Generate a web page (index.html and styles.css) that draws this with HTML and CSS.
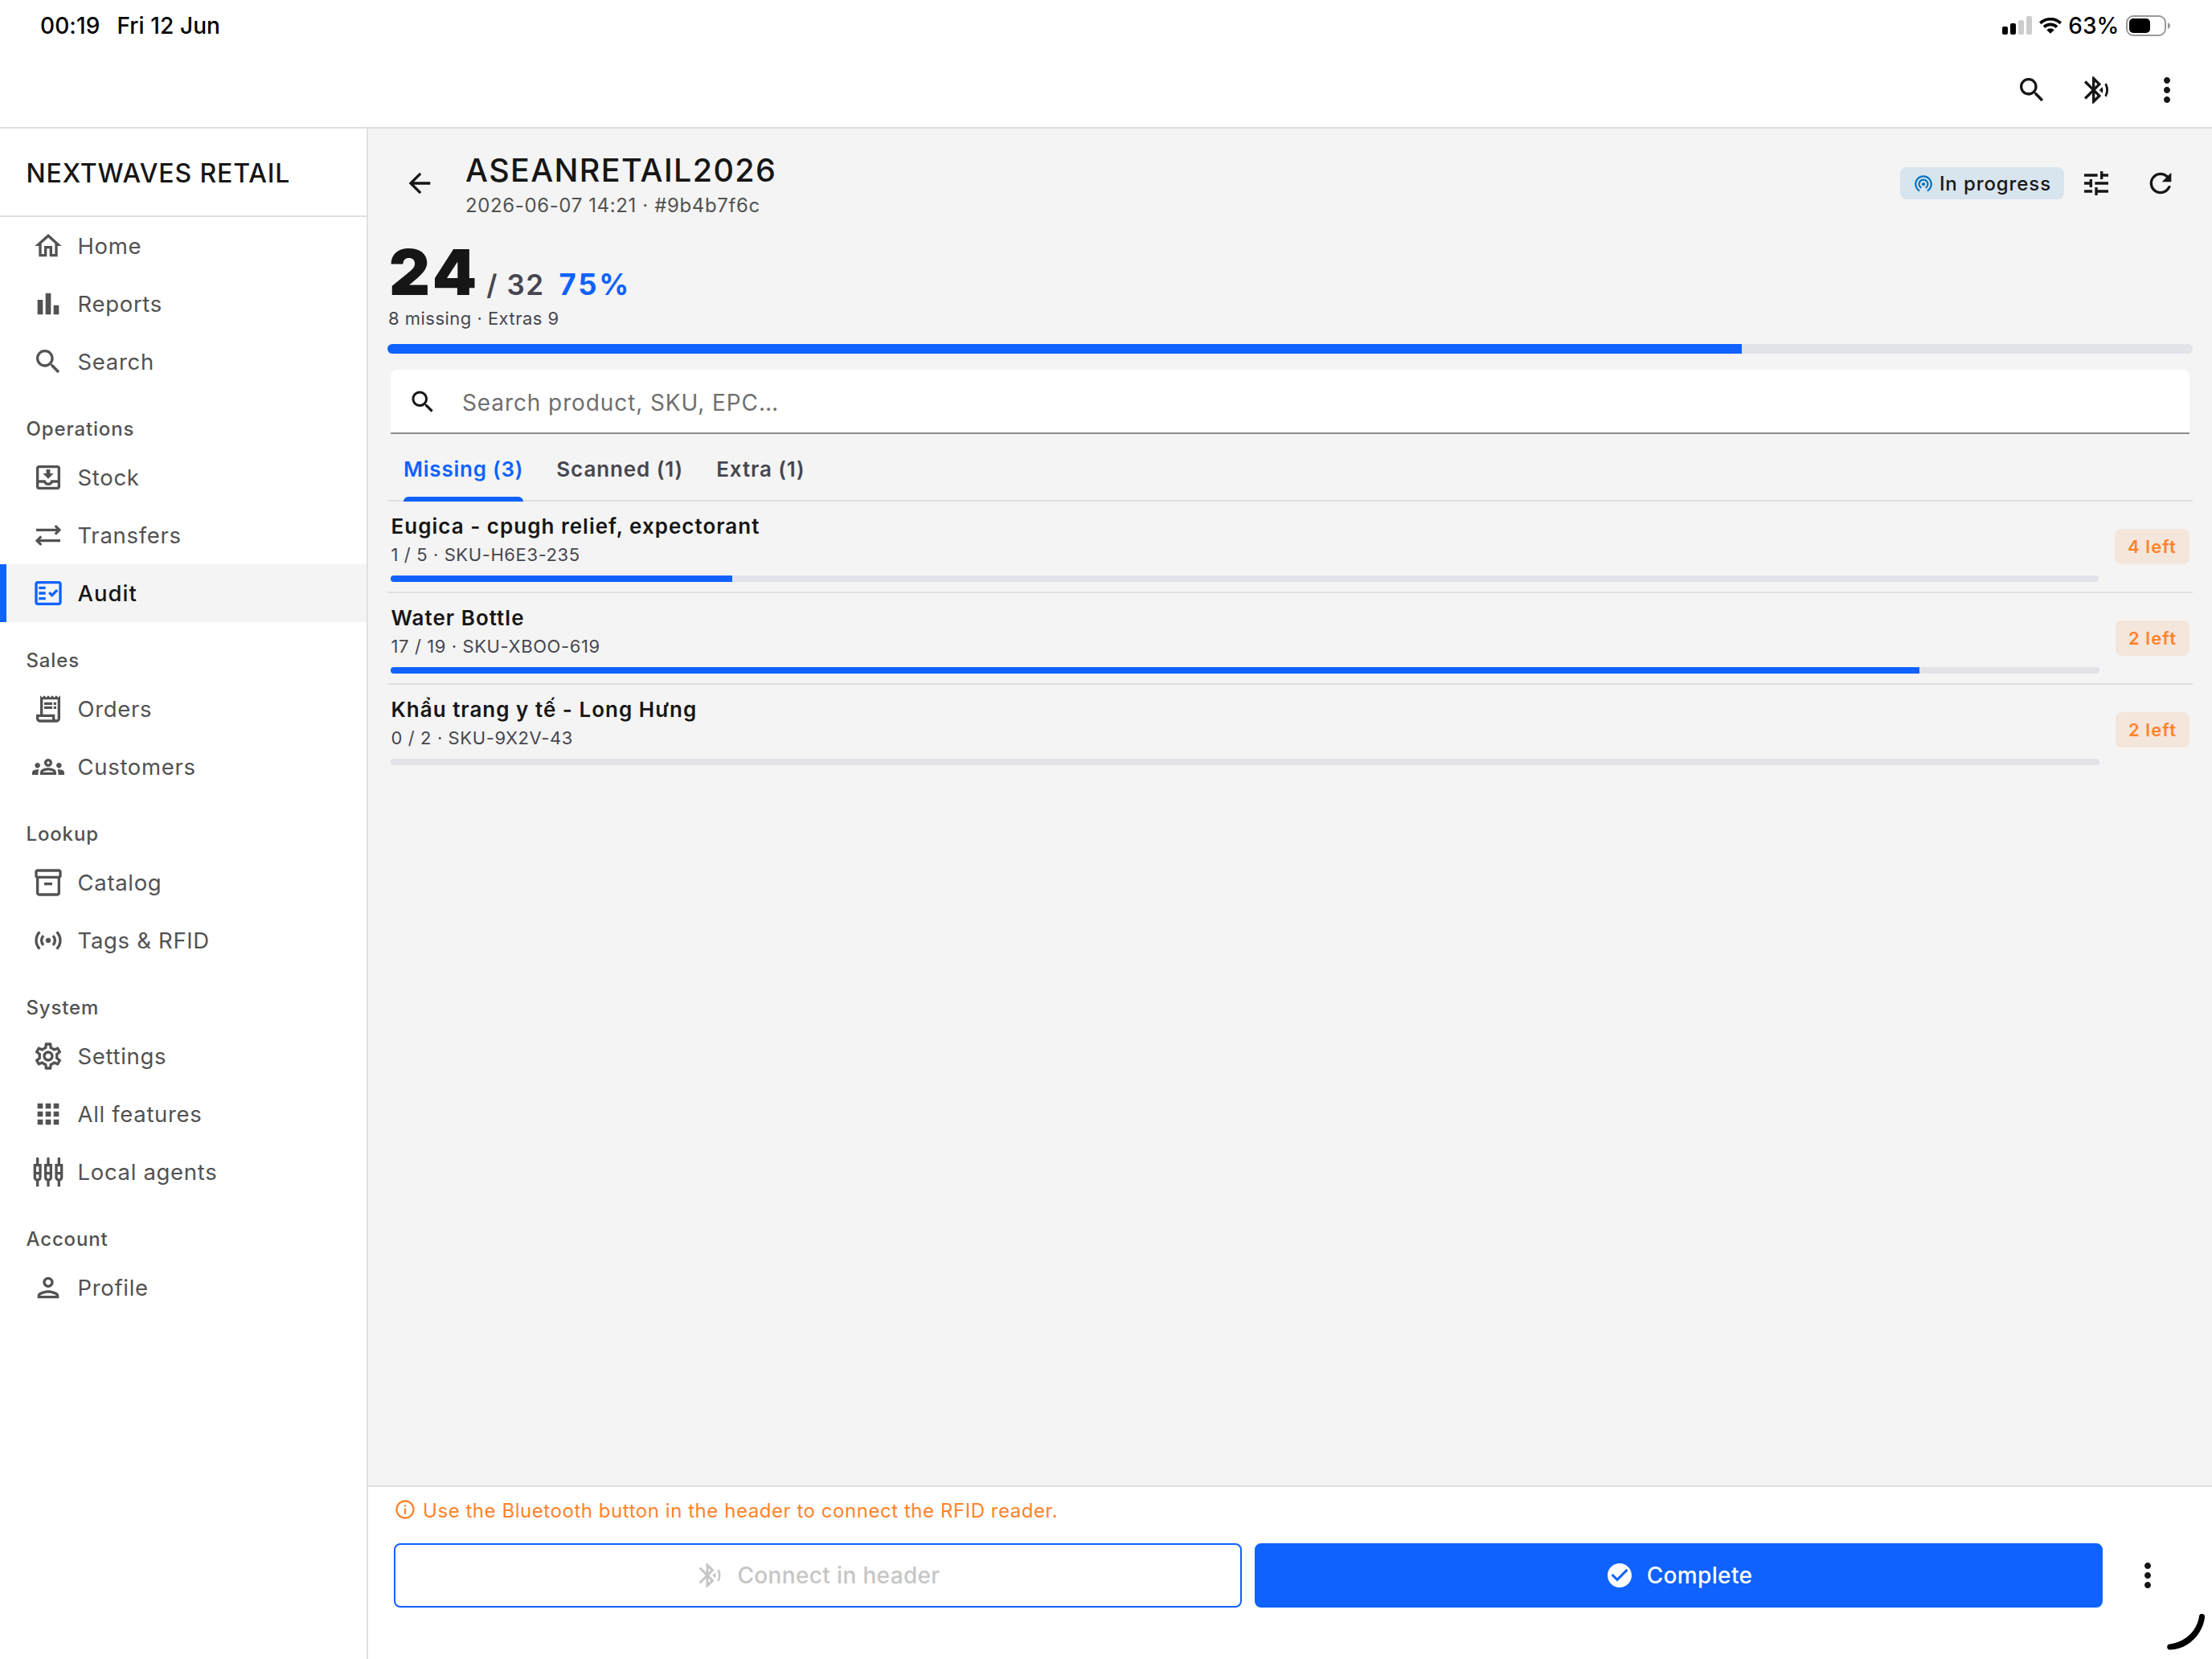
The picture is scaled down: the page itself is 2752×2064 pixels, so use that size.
FILE: index.html
```
<!DOCTYPE html>
<html lang="en">
<head>
    <meta charset="utf-8">
    <title>Nextwaves Retail - Audit</title>
    <link rel="stylesheet" href="styles.css">
</head>
<body>
    <svg class="sprite">
        <symbol id="i-search" viewBox="0 0 24 24"><path d="M15.5 14h-.79l-.28-.27C15.41 12.59 16 11.11 16 9.5 16 5.91 13.09 3 9.5 3S3 5.91 3 9.5 5.91 16 9.5 16c1.61 0 3.09-.59 4.23-1.57l.27.28v.79l5 4.99L20.49 19zm-6 0C7.01 14 5 11.99 5 9.5S7.01 5 9.5 5 14 7.01 14 9.5 11.99 14 9.5 14"/></symbol>
        <symbol id="i-bluetooth" viewBox="0 0 24 24"><path d="M14.24 12.01l2.32 2.32c.28-.72.44-1.51.44-2.33 0-.82-.16-1.59-.43-2.31l-2.33 2.32zm5.29-5.3l-1.26 1.26c.63 1.21.98 2.57.98 4.02s-.36 2.82-.98 4.02l1.2 1.2c.97-1.54 1.54-3.36 1.54-5.31-.01-1.89-.55-3.67-1.48-5.19zm-3.82 1L10 2H9v7.59L4.41 5 3 6.41 8.59 12 3 17.59 4.41 19 9 14.41V22h1l5.71-5.71-4.3-4.29 4.3-4.29zM11 5.83l1.88 1.88L11 9.59V5.83zm1.88 10.46L11 18.17v-3.76l1.88 1.88z"/></symbol>
        <symbol id="i-more" viewBox="0 0 24 24"><path d="M12 8c1.1 0 2-.9 2-2s-.9-2-2-2-2 .9-2 2 .9 2 2 2m0 2c-1.1 0-2 .9-2 2s.9 2 2 2 2-.9 2-2-.9-2-2-2m0 6c-1.1 0-2 .9-2 2s.9 2 2 2 2-.9 2-2-.9-2-2-2"/></symbol>
    </svg>

    <header class="topbar">
        <div class="status">
            <span>00:19</span>
            <span class="status-date">Fri 12 Jun</span>
            <div class="status-right">
                <svg width="37" height="24" viewBox="0 0 37 24">
                    <rect x="0" y="13" width="7" height="10" rx="2"/>
                    <rect x="10" y="9" width="7" height="14" rx="2"/>
                    <rect x="20" y="5" width="7" height="18" rx="2" fill="#ccc"/>
                    <rect x="30" y="0" width="7" height="23" rx="2" fill="#ccc"/>
                </svg>
                <svg width="28" height="20" viewBox="0 0 28 20">
                    <g fill="none" stroke="#000" stroke-width="3.7">
                        <path d="M1.3 6.9a18.2 18.2 0 0 1 25.4 0"/>
                        <path d="M6 11.7a11.5 11.5 0 0 1 16 0"/>
                    </g>
                    <path d="M9.3 15.2a6.8 6.8 0 0 1 9.4 0L14 19.8z"/>
                </svg>
                <span>63%</span>
                <svg width="56" height="26" viewBox="0 0 56 26">
                    <rect x="1" y="1" width="48" height="24" rx="8" fill="none" stroke="#999" stroke-width="2"/>
                    <rect x="4" y="4" width="26" height="18" rx="5"/>
                    <path d="M52 9c1.9.8 3 2.3 3 4s-1.1 3.2-3 4z" fill="#999"/>
                </svg>
            </div>
        </div>
        <div class="toolbar">
            <button class="icon-btn"><svg class="ic40"><use href="#i-search"/></svg></button>
            <button class="icon-btn"><svg class="ic40"><use href="#i-bluetooth"/></svg></button>
            <button class="icon-btn more"><svg class="ic48"><use href="#i-more"/></svg></button>
        </div>
    </header>

    <div class="layout">
        <nav class="sidebar">
            <div class="brand">NEXTWAVES RETAIL</div>
            <a class="item"><svg class="ic40" viewBox="0 0 24 24"><path d="M12 5.69l5 4.5V18h-2v-6H9v6H7v-7.81zM12 3L2 12h3v8h6v-6h2v6h6v-8h3z"/></svg>Home</a>
            <a class="item"><svg class="ic40" viewBox="0 0 24 24"><path d="M4 9h4v11H4zm12 4h4v7h-4zm-6-9h4v16h-4z"/></svg>Reports</a>
            <a class="item"><svg class="ic40"><use href="#i-search"/></svg>Search</a>

            <div class="section">Operations</div>
            <a class="item"><svg class="ic40" viewBox="0 0 24 24"><path d="M19 3H5c-1.1 0-2 .9-2 2v14c0 1.1.9 2 2 2h14c1.1 0 2-.9 2-2V5c0-1.1-.9-2-2-2zm0 16H5v-3h3.56c.69 1.19 1.97 2 3.45 2s2.75-.81 3.45-2H19v3zm0-5h-4.99c0 1.1-.9 2-2 2s-2-.9-2-2H5V5h14v9zM16 9h-2.55V6h-2.9v3H8l4 4z"/></svg>Stock</a>
            <a class="item"><svg class="ic40 line" viewBox="0 0 24 24"><path d="M3 8h17.3M17.2 4.8L20.4 8l-3.2 3.2M21 16H3.7M6.8 12.8L3.6 16l3.2 3.2"/></svg>Transfers</a>
            <a class="item active"><svg class="ic40" viewBox="0 0 24 24"><path d="M20 3H4c-1.1 0-2 .9-2 2v14c0 1.1.9 2 2 2h16c1.1 0 2-.9 2-2V5c0-1.1-.9-2-2-2m0 16H4V5h16z"/><path d="M19.41 10.42L17.99 9l-3.17 3.17-1.41-1.42L12 12.16 14.82 15zM5 7h5v2H5zm0 4h5v2H5zm0 4h5v2H5z"/></svg>Audit</a>

            <div class="section">Sales</div>
            <a class="item"><svg class="ic40" viewBox="0 0 24 24"><path d="M19.5 3.5L18 2l-1.5 1.5L15 2l-1.5 1.5L12 2l-1.5 1.5L9 2 7.5 3.5 6 2v14H3v3c0 1.66 1.34 3 3 3h12c1.66 0 3-1.34 3-3V2zM15 20H6c-.55 0-1-.45-1-1v-1h10zm4-1c0 .55-.45 1-1 1s-1-.45-1-1v-3H8V5h11z"/><path d="M9 7h6v2H9zm7 0h2v2h-2zm-7 3h6v2H9zm7 0h2v2h-2z"/></svg>Orders</a>
            <a class="item"><svg class="ic40 wide" viewBox="0 0 24 24"><path d="M4 13c1.1 0 2-.9 2-2s-.9-2-2-2-2 .9-2 2 .9 2 2 2m1.13 1.1C4.76 14.04 4.39 14 4 14c-.99 0-1.93.21-2.78.58C.48 14.9 0 15.62 0 16.43V18h4.5v-1.61c0-.83.23-1.61.63-2.29M20 13c1.1 0 2-.9 2-2s-.9-2-2-2-2 .9-2 2 .9 2 2 2m4 3.43c0-.81-.48-1.53-1.22-1.85-.85-.37-1.79-.58-2.78-.58-.39 0-.76.04-1.13.1.4.68.63 1.46.63 2.29V18H24zm-7.76-2.78c-1.17-.52-2.61-.9-4.24-.9s-3.07.39-4.24.9C6.68 14.13 6 15.21 6 16.39V18h12v-1.61c0-1.18-.68-2.26-1.76-2.74M8.07 16c.09-.23.13-.39.91-.69.97-.38 1.99-.56 3.02-.56s2.05.18 3.02.56c.77.3.81.46.91.69zM12 8c.55 0 1 .45 1 1s-.45 1-1 1-1-.45-1-1 .45-1 1-1m0-2c-1.66 0-3 1.34-3 3s1.34 3 3 3 3-1.34 3-3-1.34-3-3-3"/></svg>Customers</a>

            <div class="section">Lookup</div>
            <a class="item"><svg class="ic40" viewBox="0 0 24 24"><path d="M20 2H4c-1 0-2 .9-2 2v3.01c0 .72.43 1.34 1 1.69V20c0 1.1 1.1 2 2 2h14c.9 0 2-.9 2-2V8.7c.57-.35 1-.97 1-1.69V4c0-1.1-1-2-2-2m-1 18H5V9h14zm1-13H4V4h16z"/><path d="M9 12h6v2H9z"/></svg>Catalog</a>
            <a class="item"><svg class="ic40" viewBox="0 0 24 24"><path d="M7.76 16.24C6.67 15.16 6 13.66 6 12s.67-3.16 1.76-4.24l1.42 1.42C8.45 9.9 8 10.9 8 12s.45 2.1 1.17 2.83zm8.48 0C17.33 15.16 18 13.66 18 12s-.67-3.16-1.76-4.24l-1.42 1.42C15.55 9.9 16 10.9 16 12s-.45 2.1-1.17 2.83zM12 10c-1.1 0-2 .9-2 2s.9 2 2 2 2-.9 2-2-.9-2-2-2m8 2c0 2.21-.9 4.21-2.35 5.65l1.42 1.42C20.88 17.26 22 14.76 22 12s-1.12-5.26-2.93-7.07l-1.42 1.42C19.1 7.79 20 9.79 20 12M6.35 6.35L4.93 4.93C3.12 6.74 2 9.24 2 12s1.12 5.26 2.93 7.07l1.42-1.42C4.9 16.21 4 14.21 4 12s.9-4.21 2.35-5.65"/></svg>Tags &amp; RFID</a>

            <div class="section">System</div>
            <a class="item"><svg class="ic40" viewBox="0 0 24 24"><path d="M19.43 12.98c.04-.32.07-.64.07-.98s-.03-.66-.07-.98l2.11-1.65c.19-.15.24-.42.12-.64l-2-3.46c-.09-.16-.26-.25-.44-.25-.06 0-.12.01-.17.03l-2.49 1c-.52-.4-1.08-.73-1.69-.98l-.38-2.65C14.46 2.18 14.25 2 14 2h-4c-.25 0-.46.18-.49.42l-.38 2.65c-.61.25-1.17.59-1.69.98l-2.49-1c-.06-.02-.12-.03-.18-.03-.17 0-.34.09-.43.25l-2 3.46c-.13.22-.07.49.12.64l2.11 1.65c-.04.32-.07.65-.07.98s.03.66.07.98l-2.11 1.65c-.19.15-.24.42-.12.64l2 3.46c.09.16.26.25.44.25.06 0 .12-.01.17-.03l2.49-1c.52.4 1.08.73 1.69.98l.38 2.65c.03.24.24.42.49.42h4c.25 0 .46-.18.49-.42l.38-2.65c.61-.25 1.17-.59 1.69-.98l2.49 1c.06.02.12.03.18.03.17 0 .34-.09.43-.25l2-3.46c.12-.22.07-.49-.12-.64l-2.11-1.65zm-1.98-1.71c.04.31.05.52.05.73 0 .21-.02.43-.05.73l-.14 1.13.89.7 1.08.84-.7 1.21-1.27-.51-1.04-.42-.9.68c-.43.32-.84.56-1.25.73l-1.06.43-.16 1.13-.2 1.35h-1.4l-.19-1.35-.16-1.13-1.06-.43c-.43-.18-.83-.41-1.23-.71l-.91-.7-1.06.43-1.27.51-.7-1.21 1.08-.84.89-.7-.14-1.13c-.03-.31-.05-.54-.05-.74s.02-.43.05-.73l.14-1.13-.89-.7-1.08-.84.7-1.21 1.27.51 1.04.42.9-.68c.43-.32.84-.56 1.25-.73l1.06-.43.16-1.13.2-1.35h1.39l.19 1.35.16 1.13 1.06.43c.43.18.83.41 1.23.71l.91.7 1.06-.43 1.27-.51.7 1.21-1.07.85-.89.7.14 1.13zM12 8c-2.21 0-4 1.79-4 4s1.79 4 4 4 4-1.79 4-4-1.79-4-4-4zm0 6c-1.1 0-2-.9-2-2s.9-2 2-2 2 .9 2 2-.9 2-2 2z"/></svg>Settings</a>
            <a class="item"><svg class="ic40" viewBox="0 0 24 24"><path d="M4 8h4V4H4zm6 12h4v-4h-4zm-6 0h4v-4H4zm0-6h4v-4H4zm6 0h4v-4h-4zm6-10v4h4V4zm-6 4h4V4h-4zm6 6h4v-4h-4zm0 6h4v-4h-4z"/></svg>All features</a>
            <a class="item">
                <svg class="ic40" viewBox="0 0 24 24" fill-rule="evenodd">
                    <path id="plug" d="M5 2c0-.55-.45-1-1-1s-1 .45-1 1v4H1v10c0 1.3.84 2.4 2 2.82V23h2v-4.18C6.16 18.4 7 17.3 7 16V6H5zM3 8h2v4H3zM5 16c0 .55-.45 1-1 1s-1-.45-1-1v-2h2z"/>
                    <use href="#plug" x="8"/>
                    <use href="#plug" x="16"/>
                </svg>Local agents</a>

            <div class="section">Account</div>
            <a class="item"><svg class="ic40" viewBox="0 0 24 24"><path d="M12 6c1.1 0 2 .9 2 2s-.9 2-2 2-2-.9-2-2 .9-2 2-2m0 10c2.7 0 5.8 1.29 6 2H6c.23-.72 3.31-2 6-2m0-12C9.79 4 8 5.79 8 8s1.79 4 4 4 4-1.79 4-4-1.79-4-4-4m0 10c-2.67 0-8 1.34-8 4v2h16v-2c0-2.66-5.33-4-8-4"/></svg>Profile</a>
        </nav>

        <main class="main">
            <div class="content">
                <div class="page-head">
                    <button class="icon-btn"><svg class="ic40" viewBox="0 0 24 24"><path d="M20 11H7.83l5.59-5.59L12 4l-8 8 8 8 1.41-1.41L7.83 13H20z"/></svg></button>
                    <div class="titles">
                        <h1>ASEANRETAIL2026</h1>
                        <p>2026-06-07 14:21 · #9b4b7f6c</p>
                    </div>
                    <div class="pill">
                        <svg viewBox="0 0 24 24"><path d="M12 11c-1.1 0-2 .9-2 2s.9 2 2 2 2-.9 2-2-.9-2-2-2zm6 2c0-3.31-2.69-6-6-6s-6 2.69-6 6c0 2.22 1.21 4.15 3 5.19l1-1.74c-1.19-.7-2-1.97-2-3.45 0-2.21 1.79-4 4-4s4 1.79 4 4c0 1.48-.81 2.75-2 3.45l1 1.74c1.79-1.04 3-2.97 3-5.19zM12 3C6.48 3 2 7.48 2 13c0 3.7 2.01 6.92 4.99 8.65l1-1.73C5.61 18.53 4 15.96 4 13c0-4.42 3.58-8 8-8s8 3.58 8 8c0 2.96-1.61 5.53-4 6.92l1 1.73c2.99-1.73 5-4.95 5-8.65 0-5.52-4.48-10-10-10z"/></svg>
                        In progress
                    </div>
                    <button class="icon-btn"><svg class="ic40" viewBox="0 0 24 24"><path d="M3 17v2h6v-2H3zM3 5v2h10V5H3zm10 16v-2h8v-2h-8v-2h-2v6h2zM7 9v2H3v2h4v2h2V9H7zm14 4v-2H11v2h10zm-6-4h2V7h4V5h-4V3h-2v6z"/></svg></button>
                    <button class="icon-btn"><svg class="ic40" viewBox="0 0 24 24"><path d="M17.65 6.35C16.2 4.9 14.21 4 12 4c-4.42 0-7.99 3.58-7.99 8s3.57 8 7.99 8c3.73 0 6.84-2.55 7.73-6h-2.08c-.82 2.33-3.04 4-5.65 4-3.31 0-6-2.69-6-6s2.69-6 6-6c1.66 0 3.14.69 4.22 1.78L13 11h7V4l-2.35 2.35z"/></svg></button>
                </div>

                <div class="stats">
                    <span class="count">24</span>
                    <span class="total">/ 32</span>
                    <span class="percent">75%</span>
                </div>
                <div class="stats-note">8 missing · Extras 9</div>
                <div class="progress"><div class="fill" style="width: 75%"></div></div>

                <label class="search">
                    <svg><use href="#i-search"/></svg>
                    <input type="text" placeholder="Search product, SKU, EPC…">
                </label>

                <div class="tabs">
                    <div class="tab selected">Missing (3)</div>
                    <div class="tab">Scanned (1)</div>
                    <div class="tab">Extra (1)</div>
                </div>

                <div class="row">
                    <div class="product">
                        <div class="name">Eugica - cpugh relief, expectorant</div>
                        <div class="sku">1 / 5 · SKU-H6E3-235</div>
                        <div class="progress small"><div class="fill" style="width: 20%"></div></div>
                    </div>
                    <div class="left">4 left</div>
                </div>
                <div class="row">
                    <div class="product">
                        <div class="name">Water Bottle</div>
                        <div class="sku">17 / 19 · SKU-XBOO-619</div>
                        <div class="progress small"><div class="fill" style="width: 89.47%"></div></div>
                    </div>
                    <div class="left">2 left</div>
                </div>
                <div class="row">
                    <div class="product">
                        <div class="name">Khẩu trang y tế - Long Hưng</div>
                        <div class="sku">0 / 2 · SKU-9X2V-43</div>
                        <div class="progress small"></div>
                    </div>
                    <div class="left">2 left</div>
                </div>
            </div>

            <footer class="footer">
                <div class="hint">
                    <svg viewBox="0 0 24 24"><path d="M11 7h2v2h-2zm0 4h2v6h-2zm1-9C6.48 2 2 6.48 2 12s4.48 10 10 10 10-4.48 10-10S17.52 2 12 2m0 18c-4.41 0-8-3.59-8-8s3.59-8 8-8 8 3.59 8 8-3.59 8-8 8"/></svg>
                    <span>Use the Bluetooth button in the header to connect the RFID reader.</span>
                </div>
                <div class="actions">
                    <button class="btn outline"><svg><use href="#i-bluetooth"/></svg>Connect in header</button>
                    <button class="btn primary"><svg viewBox="0 0 24 24"><path d="M12 2C6.48 2 2 6.48 2 12s4.48 10 10 10 10-4.48 10-10S17.52 2 12 2m-2 15l-5-5 1.41-1.41L10 14.17l7.59-7.59L19 8z"/></svg>Complete</button>
                    <button class="icon-btn"><svg class="ic48"><use href="#i-more"/></svg></button>
                </div>
            </footer>
        </main>
    </div>

    <!-- corner swipe handle -->
    <svg class="corner" viewBox="0 0 72 74"><path d="M56 21a3.5 3.5 0 0 1 7 .8C61 42 43 62 20 62.500a3.500 3.500 0 0 1-.5-7C38 53 53 40 56 21z"/></svg>
</body>
</html>
```
FILE: styles.css
```
* {
    box-sizing: border-box;
}
body {
    margin: 0;
    width: 2752px;
    height: 2064px;
    display: flex;
    flex-direction: column;
    overflow: hidden;
    background-color: #fff;
    color: #161616;
    font-family: Inter, "Noto Sans", sans-serif;
    font-size: 28px;
}
h1, p {
    margin: 0;
}
svg {
    display: block;
    flex: none;
    fill: currentColor;
}
button {
    font: inherit;
    color: inherit;
    border: 0;
    padding: 0;
    background: none;
}
.sprite {
    display: none;
}
.ic40 {
    width: 40px;
    height: 40px;
}
.ic48 {
    width: 48px;
    height: 48px;
}
.line {
    fill: none;
    stroke: currentColor;
    stroke-width: 1.9;
}
.icon-btn {
    width: 80px;
    height: 80px;
    display: flex;
    align-items: center;
    justify-content: center;
    flex: none;
}

/* top bar */
.topbar {
    height: 160px;
    flex: none;
    border-bottom: 2px solid #e0e0e0;
}
.status {
    height: 64px;
    display: flex;
    align-items: center;
    padding: 0 51px 0 50px;
    color: #000;
    font-weight: 500;
    letter-spacing: 0.1px;
}
.status-date {
    margin-left: 21px;
}
.status-right {
    margin-left: auto;
    display: flex;
    align-items: center;
    gap: 8.5px;
}
.toolbar {
    height: 96px;
    display: flex;
    align-items: center;
    justify-content: flex-end;
    padding-right: 16px;
}
.more {
    margin-left: 8px;
}

.layout {
    flex: 1;
    display: flex;
    min-height: 0;
}

/* sidebar */
.sidebar {
    width: 458px;
    flex: none;
    border-right: 2px solid #e0e0e0;
    color: #525252;
}
.brand {
    height: 110px;
    padding: 2px 0 0 32.5px;
    border-bottom: 2px solid #e0e0e0;
    color: #161616;
    font-size: 32px;
    font-weight: 500;
    line-height: 108px;
    letter-spacing: 0.87px;
}
.item {
    height: 72px;
    display: flex;
    align-items: center;
    gap: 16.5px;
    padding-left: 40px;
    font-size: 27.5px;
    letter-spacing: 0.68px;
}
.item.active {
    padding-left: 32px;
    border-left: 8px solid #0f62fe;
    background-color: #f4f4f4;
    color: #161616;
    font-weight: 550;
    letter-spacing: 1px;
}
.item.active svg {
    color: #0f62fe;
}
.section {
    height: 72px;
    padding: 24px 0 0 32.5px;
    font-size: 24px;
    font-weight: 550;
    line-height: 48px;
    letter-spacing: 0.85px;
}

/* main */
.main {
    flex: 1;
    display: flex;
    flex-direction: column;
    background-color: #f4f4f4;
}
.content {
    flex: 1;
    padding: 0 24px;
}
.page-head {
    height: 136px;
    display: flex;
    align-items: center;
}
.titles {
    flex: 1;
    margin-left: 17px;
    padding-top: 15px;
}
h1 {
    font-size: 39.5px;
    font-weight: 500;
    line-height: 40px;
    letter-spacing: 1.35px;
}
.titles p {
    color: #525252;
    font-size: 24px;
    line-height: 47px;
    letter-spacing: 0.62px;
}
.pill {
    height: 40px;
    display: flex;
    align-items: center;
    gap: 7px;
    padding: 0 16px;
    border-radius: 8px;
    background-color: #d8e4ee;
    font-size: 24px;
    font-weight: 500;
    letter-spacing: 0.9px;
}
.pill svg {
    width: 26px;
    height: 26px;
    color: #0072c3;
}
.stats {
    display: flex;
    align-items: baseline;
    height: 84px;
    line-height: 84px;
}
.count {
    margin-left: 2px;
    font-size: 79px;
    font-weight: 900;
    letter-spacing: 4px;
}
.total {
    margin-left: 8px;
    color: #46464f;
    font-size: 35px;
    font-weight: 600;
    letter-spacing: 1.5px;
}
.percent {
    margin-left: 18px;
    color: #0f62fe;
    font-size: 36.5px;
    font-weight: 700;
    letter-spacing: 2.8px;
}
.stats-note {
    padding-left: 1px;
    color: #46464f;
    font-size: 22px;
    line-height: 32px;
    letter-spacing: 0.48px;
}
.progress {
    height: 12px;
    margin-top: 16px;
    border-radius: 6px;
    background-color: #e2e2e9;
    overflow: hidden;
}
.fill {
    height: 100%;
    background-color: #0f62fe;
}
.progress.small {
    height: 8px;
    margin-top: 8px;
    border-radius: 4px;
}
.search {
    height: 80px;
    margin: 20px 4px 0;
    padding: 2px 22px 0;
    display: flex;
    align-items: center;
    gap: 31px;
    border-bottom: 2px solid #8d8d8d;
    border-radius: 8px 8px 0 0;
    background-color: #fff;
}
.search svg {
    width: 36px;
    height: 36px;
}
.search input {
    flex: 1;
    height: 60px;
    padding: 2px 0 0;
    border: 0;
    outline: 0;
    background: none;
    font: inherit;
    letter-spacing: 0.9px;
}
.search input::placeholder {
    color: #6f6f6f;
}
.tabs {
    height: 84px;
    display: flex;
    gap: 41px;
    padding-left: 20px;
    border-bottom: 2px solid #e0e0e0;
    color: #46464f;
    font-size: 26px;
    font-weight: 600;
    letter-spacing: 0.9px;
}
.tab {
    position: relative;
    height: 84px;
    padding-top: 2px;
    line-height: 83px;
}
.selected {
    color: #0f62fe;
    letter-spacing: 0.77px;
}
.selected::after {
    content: "";
    position: absolute;
    left: 0;
    right: 0;
    bottom: 0;
    height: 6px;
    border-radius: 6px 6px 0 0;
    background-color: #0f62fe;
}
.row {
    height: 114px;
    display: flex;
    align-items: center;
    gap: 20px;
    padding: 0 4px;
    border-bottom: 2px solid #e0e0e0;
}
.row:last-child {
    border-color: transparent;
}
.product {
    flex: 1;
    padding: 14px 0 12px;
}
.name {
    padding-left: 0.5px;
    font-size: 26px;
    font-weight: 600;
    line-height: 34px;
    letter-spacing: 1.01px;
}
.sku {
    padding-left: 0.5px;
    color: #46464f;
    font-size: 22px;
    line-height: 36px;
    letter-spacing: 0.6px;
}
.left {
    height: 44px;
    padding: 0 16px;
    border-radius: 8px;
    background-color: #f5e6dc;
    color: #ff832b;
    font-size: 22px;
    font-weight: 600;
    line-height: 44px;
    letter-spacing: 1.1px;
}

/* bottom actions */
.footer {
    height: 216px;
    padding: 14px 40px 0 32px;
    border-top: 2px solid #e0e0e0;
    background-color: #fff;
}
.hint {
    height: 28px;
    display: flex;
    align-items: center;
    gap: 8px;
    color: #ff832b;
    font-size: 24px;
    letter-spacing: 0.55px;
}
.hint svg {
    width: 28px;
    height: 28px;
}
.hint span {
    padding-top: 3px;
    line-height: 28px;
}
.actions {
    display: flex;
    gap: 16px;
    margin-top: 28px;
}
.btn {
    flex: 1;
    height: 80px;
    display: flex;
    align-items: center;
    justify-content: center;
    gap: 16px;
    border: 2px solid #0f62fe;
    border-radius: 8px;
    font-size: 28px;
    font-weight: 550;
    letter-spacing: 0.35px;
}
.btn svg {
    width: 36px;
    height: 36px;
}
.outline {
    color: #c6c6c6;
}
.primary {
    background-color: #0f62fe;
    color: #fff;
}
.corner {
    position: absolute;
    left: 2680px;
    top: 1990px;
    width: 72px;
    height: 74px;
    fill: #000;
}
```
